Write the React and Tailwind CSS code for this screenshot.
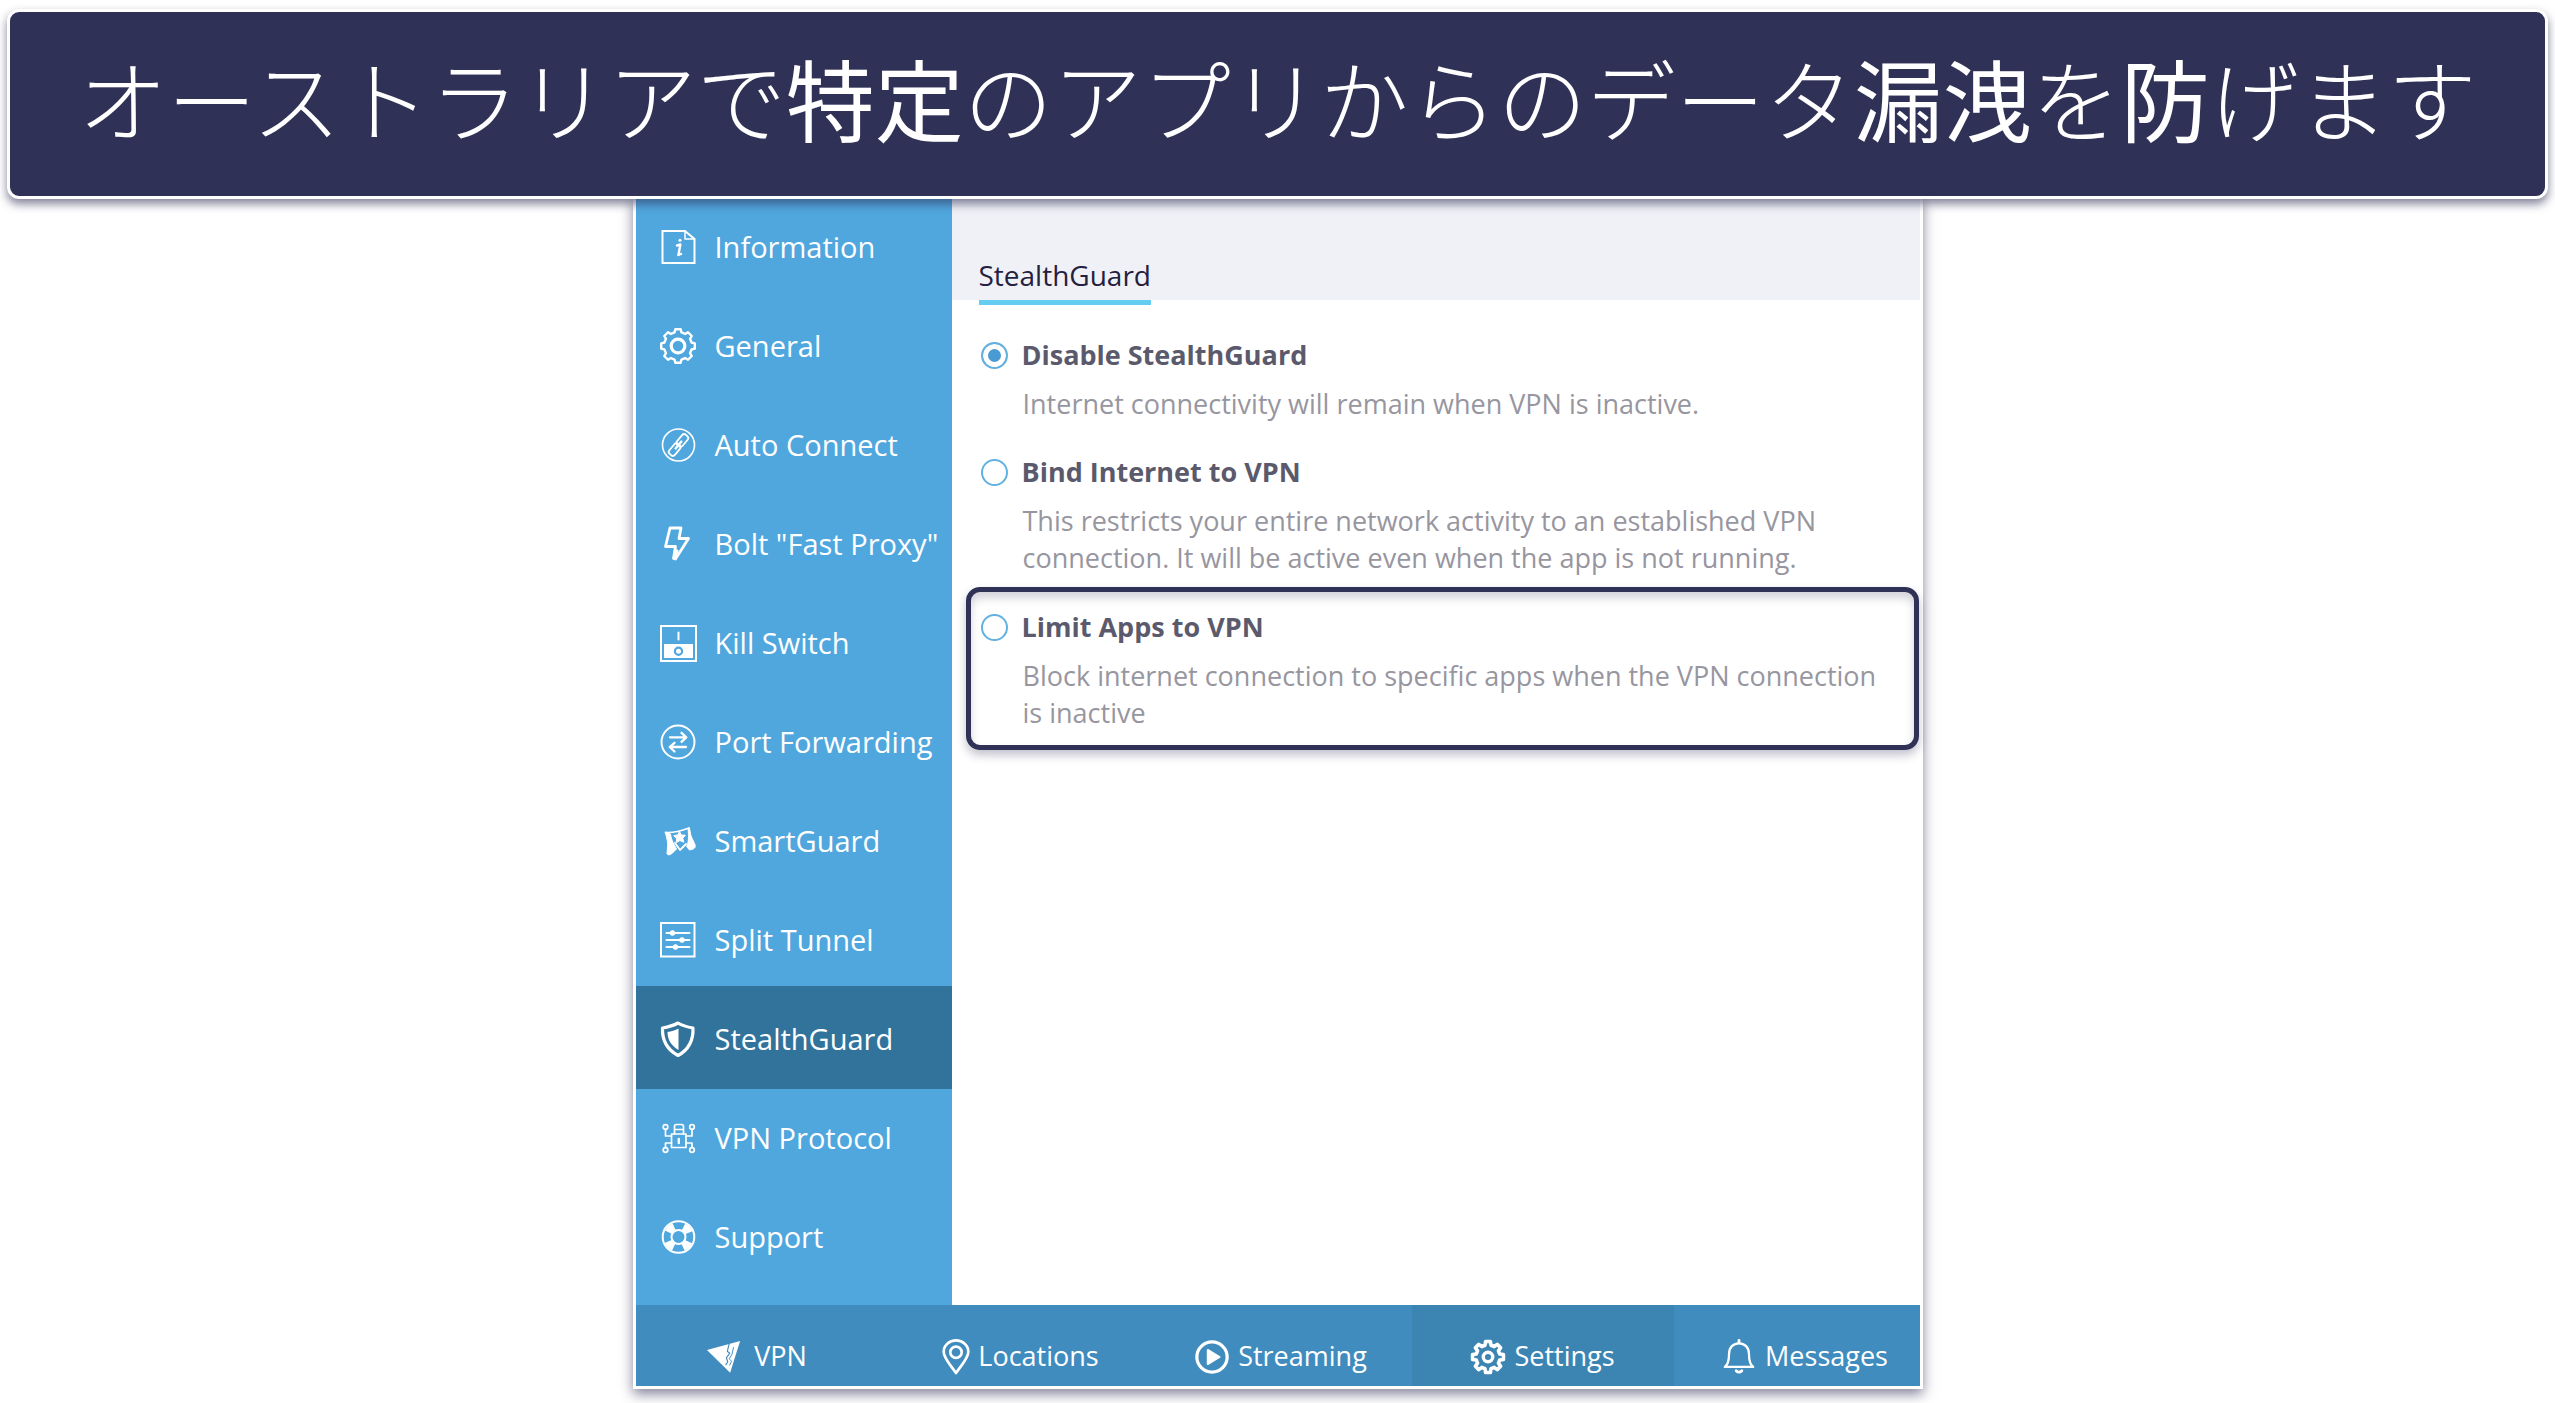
import React from "react";

function Svg({ children, className = "size-[38px]" }) {
  return (
    <svg
      viewBox="0 0 38 38"
      className={className}
      fill="none"
      stroke="currentColor"
      strokeWidth="2"
      strokeLinecap="round"
      strokeLinejoin="round"
      aria-hidden="true"
    >
      {children}
    </svg>
  );
}

function gearPath(c, outer, inner, teeth) {
  const points = [];
  const step = (Math.PI * 2) / teeth;
  for (let i = 0; i < teeth; i++) {
    const a = i * step - Math.PI / 2;
    [
      [outer, -0.2],
      [outer, 0.2],
      [inner, 0.32],
      [inner, 0.68],
    ].forEach(([r, k]) => {
      const t = a + step * k;
      points.push(`${(c + r * Math.cos(t)).toFixed(2)} ${(c + r * Math.sin(t)).toFixed(2)}`);
    });
  }
  return `M${points.join("L")}Z`;
}

const InfoIcon = () => (
  <Svg>
    <path d="M3.5 3h22.5l9.5 8v24h-32z" strokeLinejoin="miter" />
    <path d="M26 3v8h9.5" strokeWidth="1.5" />
    <path d="M18 17.5l3.4-1-2 10.5 2.6-1" strokeWidth="2.4" />
    <circle cx="21" cy="12.3" r="1.5" fill="currentColor" stroke="none" />
  </Svg>
);

const GeneralIcon = () => (
  <Svg>
    <path d={gearPath(19, 17, 14, 8)} strokeWidth="2.4" />
    <circle cx="19" cy="19" r="6.8" strokeWidth="3.2" />
  </Svg>
);

const LinkIcon = () => (
  <Svg>
    <circle cx="19.5" cy="19" r="16" strokeWidth="1.6" />
    <g transform="rotate(-50 19.5 19)" strokeWidth="1.8">
      <rect x="7" y="15.4" width="13" height="7.2" rx="2.6" />
      <rect x="19" y="15.4" width="13" height="7.2" rx="2.6" />
      <path d="M15 19h9" strokeWidth="2.4" />
    </g>
  </Svg>
);

const BoltIcon = () => (
  <Svg>
    <path d="M11 3h11l-2 10.500h9.500L16.500 34l-2-.5 2-12H6.500z" strokeWidth="2.800" />
    <path d="M15.500 32.500l2.300-6.500" strokeWidth="3.400" />
  </Svg>
);

const KillIcon = () => (
  <Svg>
    <path d="M2 2h35v35H2z" strokeLinejoin="miter" />
    <path d="M19.500 8.500v7" />
    <path d="M5 20h29v14H5z" fill="currentColor" stroke="none" />
    <circle cx="19.500" cy="27.300" r="3.600" className="stroke-[#4fa7de]" strokeWidth="2.200" />
  </Svg>
);

const PortIcon = () => (
  <Svg>
    <circle cx="19" cy="19" r="16.500" />
    <path d="M11 14.300h15M22.500 9.800l4.800 4.500-4.800 4.500" strokeWidth="2.300" />
    <path d="M27 24h-15M15.500 19.800l-4.800 4.200 4.800 4.500" strokeWidth="2.300" />
  </Svg>
);

const SmartIcon = () => (
  <Svg>
    <path d="M6.500 10.500c8 .5 14-1 23.500-4.500l2 11" strokeWidth="1.800" />
    <path d="M6.500 10.500l5 1.500c1 7 4 11 6 15l-4.500 4.500-3 1.500-2-1 .5-7c1-4-1-9-2-14.500z" fill="currentColor" strokeWidth="1" />
    <path d="M30 6l1.500 7 4.500 9.500c1 4-1.500 4.500-5.500 5.500l-3-3.500c2-3.500 2.500-9 1.500-18z" fill="currentColor" strokeWidth="1" />
    <path d="M20.500 9.500l1.900 3.500 4 .2-2.600 3 1 4-3.900-1.600-3.700 2 .5-4.200-3-2.700 4-.8z" fill="currentColor" strokeWidth="1" />
    <path d="M16 21l5 7 6-6" strokeWidth="1.800" />
  </Svg>
);

const TunnelIcon = () => (
  <Svg>
    <path d="M2 2h33.500v33.500H2z" strokeLinejoin="miter" />
    <path d="M7.500 12h23M7.500 19h23M7.500 26h23" />
    <g fill="currentColor" stroke="none">
      <circle cx="13.500" cy="12" r="2.700" />
      <circle cx="23" cy="19" r="2.700" />
      <circle cx="16.500" cy="26" r="2.700" />
    </g>
  </Svg>
);

const ShieldIcon = () => (
  <Svg>
    <path d="M19 3c4 2.500 9 4 15 5 .5 12-4 21.500-15 27.500C8 29.500 3 20 3.500 8 9.500 7 14.500 5.500 19 3z" strokeWidth="3.200" />
    <path d="M19.500 8.500v21.500C12 25.500 8.500 19.500 8.500 12c4-.5 7.500-1.500 11-3.500z" fill="currentColor" stroke="none" />
  </Svg>
);

const ProtocolIcon = () => (
  <Svg>
    <g strokeWidth="1.700">
      <path d="M12.500 15h14.500v13.500H12.500z" />
      <path d="M15.500 15V7.500q0-2 2-2h5q2 0 2 2V15M15.500 10.500h9" />
      <path d="M19.800 20v4" strokeWidth="2.400" />
      <circle cx="6.500" cy="8" r="2.300" />
      <circle cx="33" cy="8" r="2.300" />
      <circle cx="6.500" cy="31" r="2.300" />
      <circle cx="33" cy="31" r="2.300" />
      <path d="M6.500 10.500v6.500h6M33 10.500v6.500h-6M6.500 28.500V24h6M33 28.500V24h-6" />
    </g>
  </Svg>
);

const SupportIcon = () => (
  <Svg>
    <circle cx="19.500" cy="19" r="15.800" strokeWidth="2" />
    <circle cx="19.500" cy="19" r="11.300" strokeWidth="7.500" strokeDasharray="8 9.750" strokeDashoffset="-4.880" strokeLinecap="butt" />
    <circle cx="19.500" cy="19" r="7" strokeWidth="2" />
  </Svg>
);

const LogoIcon = () => (
  <Svg className="size-9">
    <path d="M1 11.500L36 2 25.500 35.500z" fill="currentColor" stroke="none" />
    <g className="stroke-[#408cbe]" strokeWidth="1.200">
      <path d="M24.500 5l-2 8 2.500 2-3.500 5 1.500 4-2 3" />
      <path d="M29 9l-1.500 7-3 5 2.500 2.500-2 4" strokeWidth="1" />
    </g>
  </Svg>
);

const PinIcon = () => (
  <Svg className="size-9">
    <path d="M19 36C13 27 6 20.500 6 13.500a13 12 0 0 1 26 0C32 20.500 25 27 19 36z" strokeWidth="2.800" />
    <circle cx="19" cy="14" r="6" strokeWidth="2.800" />
  </Svg>
);

const PlayIcon = () => (
  <Svg className="size-9">
    <circle cx="19" cy="19" r="16" strokeWidth="3.400" />
    <path d="M14.500 11.500v15L27 19z" fill="currentColor" />
  </Svg>
);

const SettingsIcon = () => (
  <Svg className="size-9">
    <path d={gearPath(19, 16.5, 12.8, 8)} strokeWidth="3.800" />
    <circle cx="19" cy="19" r="5" strokeWidth="3.600" />
  </Svg>
);

const BellIcon = () => (
  <Svg className="size-9">
    <path d="M4 29.500c4-3 4.500-8 4.500-14C8.500 9 13 4.500 19 4.500S29.500 9 29.500 15.500c0 6 .5 11 4.500 14z" strokeWidth="2.400" />
    <path d="M19 4V1.500M16 33.500q3 3 6 0" strokeWidth="3" />
  </Svg>
);

const sections = [
  { label: "Information", Icon: InfoIcon },
  { label: "General", Icon: GeneralIcon },
  { label: "Auto Connect", Icon: LinkIcon },
  { label: 'Bolt "Fast Proxy"', Icon: BoltIcon },
  { label: "Kill Switch", Icon: KillIcon },
  { label: "Port Forwarding", Icon: PortIcon },
  { label: "SmartGuard", Icon: SmartIcon },
  { label: "Split Tunnel", Icon: TunnelIcon },
  { label: "StealthGuard", Icon: ShieldIcon, active: true },
  { label: "VPN Protocol", Icon: ProtocolIcon },
  { label: "Support", Icon: SupportIcon },
];

const tabs = [
  { label: "VPN", Icon: LogoIcon, gap: "gap-3" },
  { label: "Locations", Icon: PinIcon, gap: "gap-1" },
  { label: "Streaming", Icon: PlayIcon, gap: "gap-2" },
  { label: "Settings", Icon: SettingsIcon, gap: "gap-2", active: true },
  { label: "Messages", Icon: BellIcon, gap: "gap-2" },
];

const options = [
  {
    id: "disable",
    title: "Disable StealthGuard",
    text: "Internet connectivity will remain when VPN is inactive.",
    checked: true,
  },
  {
    id: "bind",
    title: "Bind Internet to VPN",
    text: "This restricts your entire network activity to an established VPN connection. It will be active even when the app is not running.",
  },
  {
    id: "limit",
    title: "Limit Apps to VPN",
    text: "Block internet connection to specific apps when the VPN connection is inactive",
    highlight: true,
  },
];

function Option({ id, title, text, checked, highlight }) {
  return (
    <div
      className={
        highlight
          ? "-mt-5 rounded-[14px] border-[5px] border-[#303156] px-2.5 pt-4 pb-3.5 shadow-[0_5px_10px_rgba(48,49,86,0.3),inset_0_6px_8px_rgba(48,49,86,0.22)]"
          : "px-[15px]"
      }
    >
      <div className="flex items-center gap-3.5">
        <input
          type="radio"
          name="stealthguard"
          id={id}
          defaultChecked={checked}
          aria-describedby={`${id}-text`}
          className="size-[27px] shrink-0 appearance-none rounded-full border-2 border-[#62b1e0] bg-white checked:bg-[#4a9bd3] checked:shadow-[inset_0_0_0_5px_white]"
        />
        <label htmlFor={id} className="text-[27px] leading-[38px] font-bold text-[#5b5a6c]">
          {title}
        </label>
      </div>
      <p id={`${id}-text`} className="mt-[11px] pr-4 pl-[42px] text-[27px] leading-[37px] text-[#9796a0]">
        {text}
      </p>
    </div>
  );
}

export default function App() {
  return (
    <div className="flex min-h-screen flex-col bg-white pb-3.5 font-['Open_Sans','Noto_Sans',sans-serif]">
      <header className="relative z-10 mx-[7px] mt-[9px] flex h-[190px] items-center justify-center rounded-xl border-[3px] border-white bg-[#303156] pb-4 shadow-[0_5px_10px_rgba(48,49,86,0.6)]">
        <h1
          lang="ja"
          className="text-[89px] leading-none font-light whitespace-nowrap text-white font-['Noto_Sans_CJK_JP',sans-serif]"
        >
          オーストラリアで<span className="font-normal">特定</span>のアプリからのデータ
          <span className="font-normal">漏洩</span>を<span className="font-normal">防</span>げます
        </h1>
      </header>

      <div className="mx-auto -mt-[3px] flex w-full max-w-[1290px] grow flex-col border-x-[3px] border-b-[3px] border-white bg-white shadow-[0_5px_12px_rgba(48,49,86,0.6)]">
        <div className="flex grow">
          <nav aria-label="Settings sections" className="flex w-[316px] shrink-0 flex-col bg-[#4fa7de] pb-4">
            {sections.map(({ label, Icon, active }) => (
              <button
                key={label}
                type="button"
                aria-current={active ? "page" : undefined}
                className={
                  active
                    ? "-my-0.5 flex h-[103px] items-center gap-[18px] bg-[#32739c] pt-0.5 pl-[23px] text-[29px] whitespace-nowrap text-white"
                    : "flex h-[99px] items-center gap-[18px] pt-0.5 pl-[23px] text-[29px] whitespace-nowrap text-white"
                }
              >
                <Icon />
                {label}
              </button>
            ))}
          </nav>

          <main className="min-w-0 grow">
            <div className="flex h-[104px] items-end bg-[#f0f1f6] px-[27px]">
              <h2 className="-mb-[5px] border-b-[5px] border-[#65ccf2] pb-1.5 text-[28px] leading-[38px] text-[#24213f]">
                StealthGuard
              </h2>
            </div>
            <fieldset className="flex flex-col gap-[31px] pt-9 pr-px pl-3.5">
              {options.map((option) => (
                <Option key={option.id} {...option} />
              ))}
            </fieldset>
          </main>
        </div>

        <footer className="overflow-hidden bg-[#408cbe]">
          <nav aria-label="Main" className="-mr-4 -ml-2.5 grid h-[81px] grid-cols-5">
            {tabs.map(({ label, Icon, gap, active }) => (
              <button
                key={label}
                type="button"
                className={`flex items-center justify-center pt-[22px] text-[27px] text-white ${gap} ${active ? "bg-[#3c85b3]" : ""}`}
              >
                <Icon />
                {label}
              </button>
            ))}
          </nav>
        </footer>
      </div>
    </div>
  );
}
